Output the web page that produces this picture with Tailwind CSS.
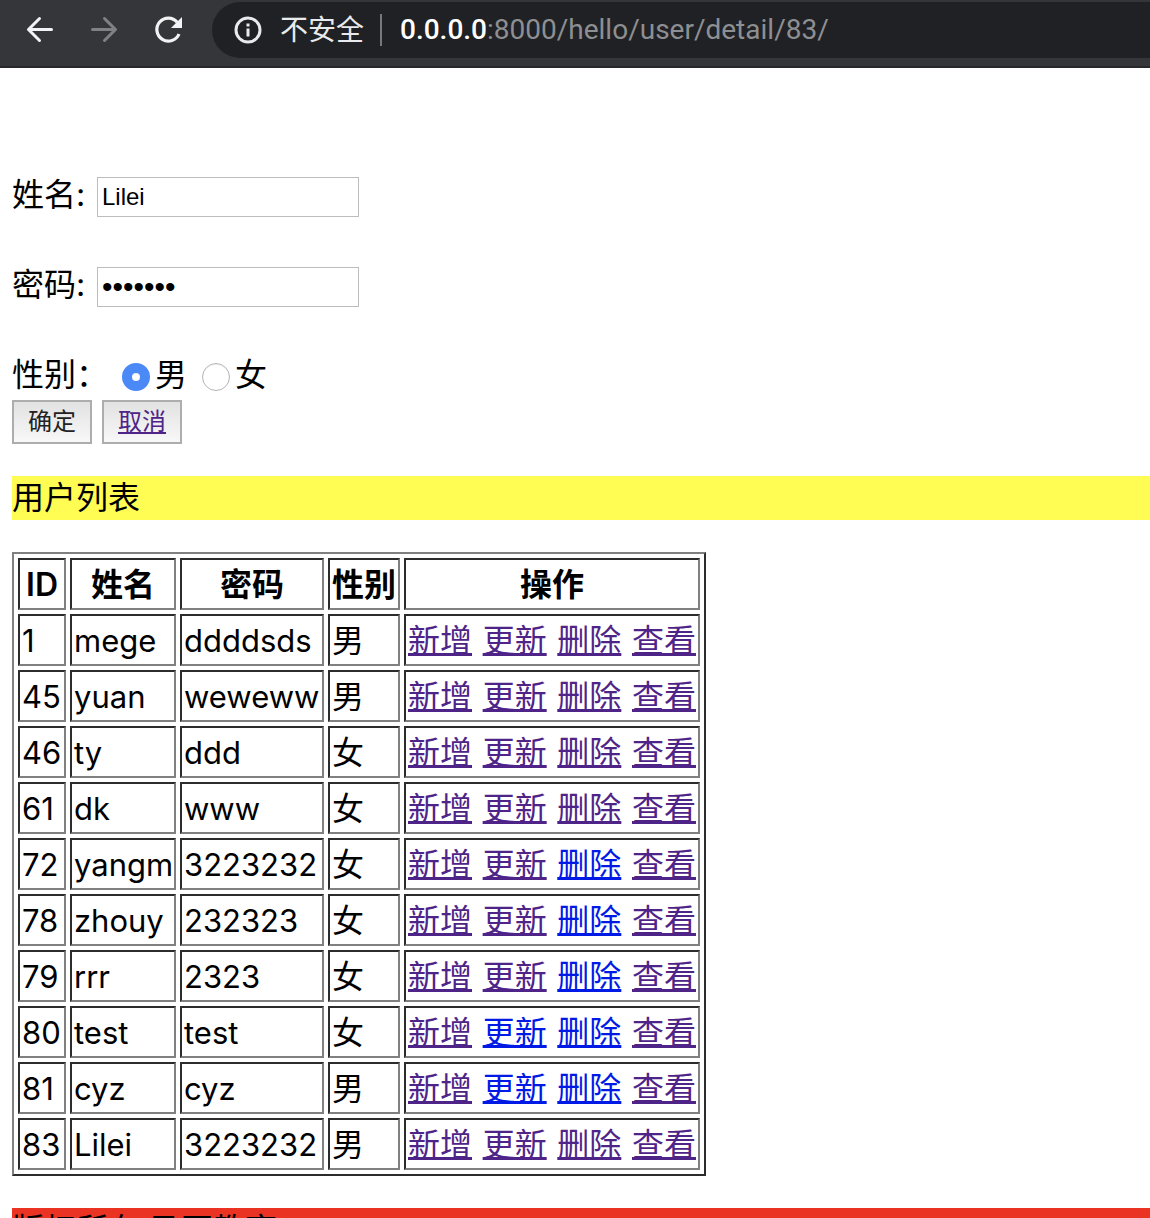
<!DOCTYPE html>
<html lang="zh-CN">
<head>
<meta charset="utf-8">
<title>用户列表</title>
<script src="https://cdn.jsdelivr.net/npm/@tailwindcss/browser@4"></script>
</head>
<body class="flex h-screen flex-col overflow-hidden bg-white font-['Inter','Noto_Sans_CJK_SC',sans-serif] text-[32px] leading-[44px] text-black">
<header class="flex shrink-0 items-start border-b-2 border-[#28272b] bg-[#35363a] pt-[2px] pb-2">
  <nav class="flex h-14 w-[212px] shrink-0 items-center gap-8 pl-6" aria-label="导航">
    <button type="button" aria-label="后退" class="size-8 text-[#f1f3f4]"><svg class="size-8" viewBox="0 0 32 32" fill="none" stroke="currentColor" stroke-width="3" stroke-linecap="round" stroke-linejoin="round"><path d="M27.500 15.500H4.500M15.500 4.500L4.500 15.500L15.500 26.500"/></svg></button>
    <button type="button" aria-label="前进" class="size-8 text-[#808184]"><svg class="size-8" viewBox="0 0 32 32" fill="none" stroke="currentColor" stroke-width="3" stroke-linecap="round" stroke-linejoin="round"><path d="M4.500 15.500H27.500M16.500 4.500L27.500 15.500L16.500 26.500"/></svg></button>
    <button type="button" aria-label="重新加载" class="size-8 text-[#f1f3f4]"><svg class="size-8" viewBox="0 0 32 32" fill="none"><path d="M25.200 8.200A11.500 11.500 0 1 0 27 20" stroke="currentColor" stroke-width="3.200"/><path d="M30 3V14H19Z" fill="currentColor"/></svg></button>
  </nav>
  <div class="flex h-14 min-w-0 flex-1 items-center rounded-l-full bg-[#202124] pl-[22px] text-[28px] leading-10 whitespace-nowrap">
    <svg class="size-7 shrink-0 text-[#e8eaed]" viewBox="0 0 28 28" fill="none"><circle cx="14" cy="14" r="12" stroke="currentColor" stroke-width="3"/><path d="M12.500 12.500h3v8h-3zM12.500 7.500h3v3h-3z" fill="currentColor"/></svg>
    <span class="ml-[18px] text-[#e8eaed]">不安全</span>
    <span class="ml-4 h-8 w-[2px] bg-[#77787b]"></span>
    <a href="#" class="ml-[18px] font-['Roboto',sans-serif] text-[#8e8f92]"><span class="font-medium text-white">0.0.0.0</span>:8000/hello/user/detail/83/</a>
  </div>
</header>
<main class="pt-[105px] pl-3">
  <form>
    <div class="mb-[46px] flex h-11 items-start">
      <label for="name" class="w-[85px]">姓名:</label>
      <input id="name" type="text" value="Lilei" class="mt-1 h-10 w-[262px] border border-[#bdbdbd] px-1 font-['Liberation_Sans',sans-serif] text-2xl">
    </div>
    <div class="mb-[46px] flex h-11 items-start">
      <label for="password" class="w-[85px]">密码:</label>
      <input id="password" type="password" value="3223232" class="mt-1 h-10 w-[262px] border border-[#bdbdbd] px-1 font-['Liberation_Sans',sans-serif] text-3xl">
    </div>
    <fieldset class="mb-[3px] flex h-11 items-center">
      <span class="w-[110px]">性别：</span>
      <input id="male" type="radio" name="sex" checked class="mt-1 size-7 appearance-none rounded-full border border-[#b4b4b4] bg-white inset-shadow-xs checked:border-[10px] checked:border-[#4b89f7]">
      <label for="male" class="mr-[15px] ml-[5px]">男</label>
      <input id="female" type="radio" name="sex" class="mt-1 size-7 appearance-none rounded-full border border-[#b4b4b4] bg-white inset-shadow-xs checked:border-[10px] checked:border-[#4b89f7]">
      <label for="female" class="ml-[5px]">女</label>
    </fieldset>
    <div class="flex gap-[10px] text-2xl leading-8">
      <button type="submit" class="h-11 w-20 border-2 border-[#adadad] bg-linear-to-b from-[#e2e2e2] to-[#f8f8f8] text-[#222]">确定</button>
      <a href="#" class="flex h-11 w-20 items-center justify-center border-2 border-[#adadad] bg-linear-to-b from-[#e2e2e2] to-[#f8f8f8] text-[#4f2488] underline underline-offset-2">取消</a>
    </div>
  </form>
  <h1 class="my-8 bg-[#fffd54]">用户列表</h1>
  <table class="w-[694px] table-fixed border-separate border-spacing-1 border-2 border-t-[#808080] border-r-[#2c2c2c] border-b-[#2c2c2c] border-l-[#808080] [&_a]:text-[#4f2488] [&_a]:underline [&_a]:underline-offset-1 [&_td]:border-2 [&_td]:border-t-[#2c2c2c] [&_td]:border-r-[#808080] [&_td]:border-b-[#808080] [&_td]:border-l-[#2c2c2c] [&_td]:px-[2px] [&_td]:pt-[3px] [&_td]:pb-px [&_td]:whitespace-nowrap [&_th]:border-2 [&_th]:border-t-[#2c2c2c] [&_th]:border-r-[#808080] [&_th]:border-b-[#808080] [&_th]:border-l-[#2c2c2c] [&_th]:px-[2px] [&_th]:pt-[3px] [&_th]:pb-px [&_th]:font-semibold [&_th]:whitespace-nowrap [&_a.fresh]:text-[#001ae6]">
    <colgroup><col class="w-12"><col class="w-[106px]"><col class="w-36"><col class="w-[72px]"><col></colgroup>
    <thead><tr><th>ID</th><th>姓名</th><th>密码</th><th>性别</th><th>操作</th></tr></thead>
    <tbody id="users"></tbody>
  </table>
  <footer class="mt-8 bg-[#ea3323]">版权所有 马哥教育</footer>
</main>
<script>
  // The last field lists the actions whose links have not been visited yet.
  const users = [
    [1, 'mege', 'ddddsds', '男', []],
    [45, 'yuan', 'weweww', '男', []],
    [46, 'ty', 'ddd', '女', []],
    [61, 'dk', 'www', '女', []],
    [72, 'yangm', '3223232', '女', ['删除']],
    [78, 'zhouy', '232323', '女', ['删除']],
    [79, 'rrr', '2323', '女', ['删除']],
    [80, 'test', 'test', '女', ['更新', '删除']],
    [81, 'cyz', 'cyz', '男', ['更新', '删除']],
    [83, 'Lilei', '3223232', '男', []],
  ];
  const actions = ['新增', '更新', '删除', '查看'];
  document.getElementById('users').innerHTML = users.map(([id, name, password, sex, fresh]) =>
    `<tr><td class="text-[31px]">${id}</td><td class="text-[31px]">${name}</td><td class="text-[31px]">${password}</td><td>${sex}</td><td><div class="flex justify-between">${
      actions.map(a => `<a href="#"${fresh.includes(a) ? ' class="fresh"' : ''}>${a}</a>`).join('')
    }</div></td></tr>`).join('');
</script>
</body>
</html>
